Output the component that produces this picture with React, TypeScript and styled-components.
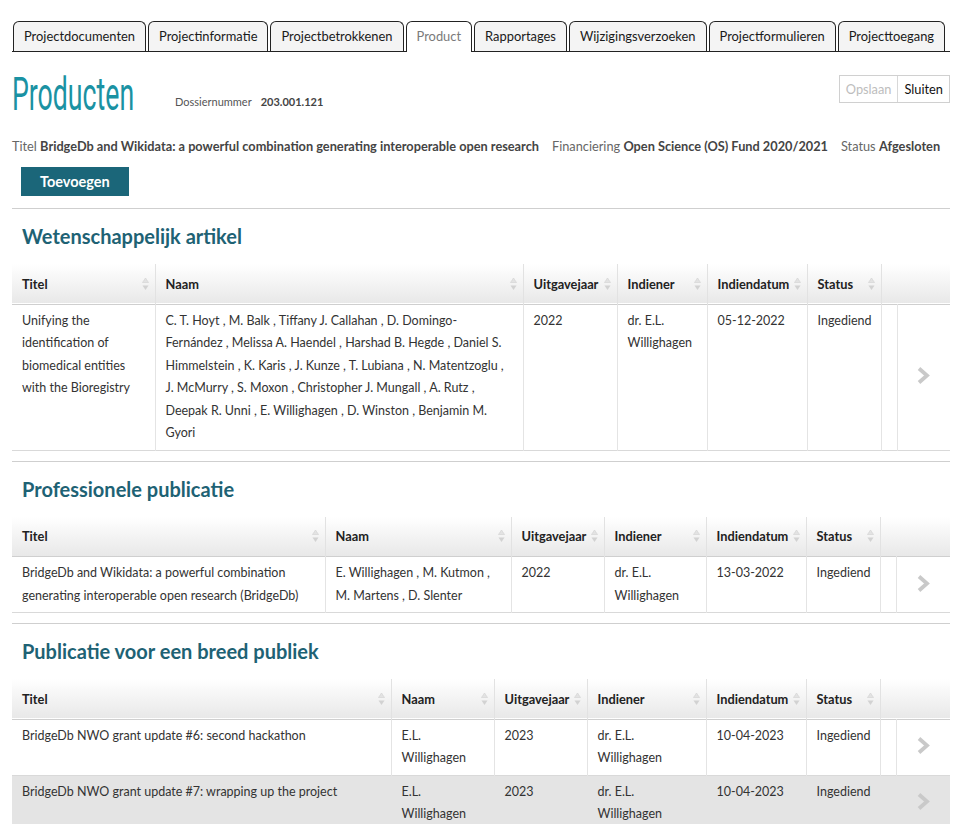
import React from "react";
import styled, { createGlobalStyle } from "styled-components";

const GlobalStyle = createGlobalStyle`
  html, body { margin: 0; padding: 0; background: #fff; }
  body { font-family: Lato, "Open Sans", sans-serif; color: #333; }
  * { box-sizing: border-box; }
`;

const Page = styled.div`
  padding: 21px 16px 0 12px;
`;

const TabBar = styled.div`
  display: flex;
  gap: 2px;
  padding-left: 1px;
  border-bottom: 1px solid #222;
  height: 31px;
`;

const Tab = styled.div<{ $active?: boolean }>`
  flex-shrink: 0;
  height: ${(p) => (p.$active ? "31px" : "30px")};
  padding: 0 10px;
  border: 1px solid #222;
  border-bottom: none;
  border-radius: 6px 6px 0 0;
  background: ${(p) => (p.$active ? "#fff" : "#f4f4f4")};
  color: ${(p) => (p.$active ? "#7a7a7a" : "#1a1a1a")};
  font-size: 12.9px;
  line-height: 28px;
  white-space: nowrap;
`;

const HeaderRow = styled.div`
  display: flex;
  align-items: flex-start;
  margin-top: 20px;
  height: 56px;
`;

const TitleBox = styled.div`
  width: 163px;
  flex-shrink: 0;
`;

const PageTitle = styled.h1`
  display: inline-block;
  margin: 0;
  font-family: Roboto, sans-serif;
  font-weight: 400;
  font-size: 46px;
  line-height: 44px;
  color: #1a92a3;
  white-space: nowrap;
  transform: scaleX(0.58);
  transform-origin: left center;
`;

const Dossier = styled.div`
  margin-top: 23px;
  font-size: 11px;
  color: #555;
  display: flex;
  gap: 9px;
  flex: 1;
`;

const DossierValue = styled.span`
  font-weight: 700;
  color: #444;
`;

const ButtonGroup = styled.div`
  display: flex;
  border: 1px solid #d0d0d0;
  height: 28px;
  margin-top: 3px;
`;

const GroupButton = styled.div<{ $disabled?: boolean }>`
  padding: 0 6px;
  font-size: 12.8px;
  line-height: 26px;
  color: ${(p) => (p.$disabled ? "#bdbdbd" : "#111")};
  & + & { border-left: 1px solid #d8d8d8; }
`;

const InfoLine = styled.div`
  display: flex;
  gap: 13px;
  font-size: 12.75px;
  color: #666;
  margin-top: 8px;
  line-height: 20px;
  white-space: nowrap;
`;

const InfoItem = styled.span`
  flex-shrink: 0;
`;

const InfoValue = styled.span`
  font-weight: 700;
  color: #444;
`;

const PrimaryButton = styled.button`
  display: block;
  margin: 11px 0 0 9px;
  height: 29px;
  padding: 0 19px;
  border: none;
  background: #1b6679;
  color: #fff;
  font-family: inherit;
  font-weight: 700;
  font-size: 14.5px;
`;

const Divider = styled.hr`
  margin: 0;
  border: none;
  border-top: 1px solid #cfcfcf;
`;

const Section = styled.section<{ $first?: boolean }>`
  margin-top: ${(p) => (p.$first ? "12px" : "10px")};
`;

const SectionTitle = styled.h2`
  margin: 0;
  padding-left: 10px;
  height: 55px;
  line-height: 55px;
  font-size: 20px;
  font-weight: 700;
  color: #1e6274;
`;

const Table = styled.table`
  width: 100%;
  border-collapse: collapse;
  table-layout: fixed;
  font-size: 12.5px;
`;

const Col = styled.col<{ $w: number }>`
  width: ${(p) => p.$w}px;
`;

const HeadRow = styled.tr`
  height: 40px;
  background: linear-gradient(#ffffff, #e8e8e8);
  border-bottom: 1px solid #cfcfcf;
`;

const Th = styled.th`
  padding: 0 6px 0 10px;
  text-align: left;
  font-weight: 700;
  font-size: 12.8px;
  color: #222;
  border-right: 1px solid #e2e2e2;
  white-space: nowrap;
  &:last-child { border-right: none; }
`;

const ThInner = styled.div`
  display: flex;
  align-items: center;
  justify-content: space-between;
`;

const BodyRow = styled.tr<{ $highlight?: boolean }>`
  background: ${(p) => (p.$highlight ? "#e4e4e4" : "#fff")};
  border-bottom: 1px solid #d9d9d9;
`;

const Td = styled.td`
  padding: 5px 10px 5px;
  vertical-align: top;
  line-height: 22.5px;
  color: #333;
  border-right: 1px solid #e4e4e4;
  &:last-child { border-right: none; }
`;

const ArrowCell = styled.td`
  vertical-align: middle;
  text-align: center;
`;

const SortIcon = () => (
  <svg width="7" height="14" viewBox="0 0 7 14">
    <path d="M3.5 1 L6.5 5.5 L0.5 5.5 Z" fill="#e3e3e3" stroke="#d2d2d2" strokeWidth="0.6" />
    <path d="M0.5 8.5 L6.5 8.5 L3.5 13 Z" fill="#d2d2d2" />
  </svg>
);

const Chevron = () => (
  <svg width="13" height="17" viewBox="0 0 13 17">
    <path d="M2 1.5 L10 8.5 L2 15.5" fill="none" stroke="#c9c9c9" strokeWidth="3.8" />
  </svg>
);

type Row = {
  titel: string;
  naam: string;
  jaar: string;
  indiener: string;
  datum: string;
  status: string;
  highlight?: boolean;
};

const headers = ["Titel", "Naam", "Uitgavejaar", "Indiener", "Indiendatum", "Status"];

const ProductTable = ({ widths, rows }: { widths: number[]; rows: Row[] }) => (
  <Table>
    <colgroup>
      {widths.map((w, i) => (
        <Col key={i} $w={w} />
      ))}
    </colgroup>
    <thead>
      <HeadRow>
        {headers.map((h) => (
          <Th key={h}>
            <ThInner>
              <span>{h}</span>
              <SortIcon />
            </ThInner>
          </Th>
        ))}
        <Th colSpan={2} />
      </HeadRow>
    </thead>
    <tbody>
      {rows.map((r, i) => (
        <BodyRow key={i} $highlight={r.highlight}>
          <Td>{r.titel}</Td>
          <Td>{r.naam}</Td>
          <Td>{r.jaar}</Td>
          <Td>{r.indiener}</Td>
          <Td>{r.datum}</Td>
          <Td>{r.status}</Td>
          <Td />
          <ArrowCell>
            <Chevron />
          </ArrowCell>
        </BodyRow>
      ))}
    </tbody>
  </Table>
);

const tabs = [
  "Projectdocumenten",
  "Projectinformatie",
  "Projectbetrokkenen",
  "Product",
  "Rapportages",
  "Wijzigingsverzoeken",
  "Projectformulieren",
  "Projecttoegang",
];

export default function App() {
  return (
    <>
      <GlobalStyle />
      <Page>
        <TabBar>
          {tabs.map((t) => (
            <Tab key={t} $active={t === "Product"}>
              {t}
            </Tab>
          ))}
        </TabBar>

        <HeaderRow>
          <TitleBox>
            <PageTitle>Producten</PageTitle>
          </TitleBox>
          <Dossier>
            <span>Dossiernummer</span>
            <DossierValue>203.001.121</DossierValue>
          </Dossier>
          <ButtonGroup>
            <GroupButton $disabled>Opslaan</GroupButton>
            <GroupButton>Sluiten</GroupButton>
          </ButtonGroup>
        </HeaderRow>

        <InfoLine>
          <InfoItem>
            Titel <InfoValue>BridgeDb and Wikidata: a powerful combination generating interoperable open research</InfoValue>
          </InfoItem>
          <InfoItem>
            Financiering <InfoValue>Open Science (OS) Fund 2020/2021</InfoValue>
          </InfoItem>
          <InfoItem>
            Status <InfoValue>Afgesloten</InfoValue>
          </InfoItem>
        </InfoLine>

        <PrimaryButton>Toevoegen</PrimaryButton>

        <Section $first>
          <Divider />
          <SectionTitle>Wetenschappelijk artikel</SectionTitle>
          <ProductTable
            widths={[143, 368, 94, 90, 100, 74, 16, 53]}
            rows={[
              {
                titel: "Unifying the identification of biomedical entities with the Bioregistry",
                naam:
                  "C. T. Hoyt , M. Balk , Tiffany J. Callahan , D. Domingo-Fernández , Melissa A. Haendel , Harshad B. Hegde , Daniel S. Himmelstein , K. Karis , J. Kunze , T. Lubiana , N. Matentzoglu , J. McMurry , S. Moxon , Christopher J. Mungall , A. Rutz , Deepak R. Unni , E. Willighagen , D. Winston , Benjamin M. Gyori",
                jaar: "2022",
                indiener: "dr. E.L. Willighagen",
                datum: "05-12-2022",
                status: "Ingediend",
              },
            ]}
          />
        </Section>

        <Section>
          <Divider />
          <SectionTitle>Professionele publicatie</SectionTitle>
          <ProductTable
            widths={[313, 186, 93, 102, 100, 74, 16, 54]}
            rows={[
              {
                titel: "BridgeDb and Wikidata: a powerful combination generating interoperable open research (BridgeDb)",
                naam: "E. Willighagen , M. Kutmon , M. Martens , D. Slenter",
                jaar: "2022",
                indiener: "dr. E.L. Willighagen",
                datum: "13-03-2022",
                status: "Ingediend",
              },
            ]}
          />
        </Section>

        <Section>
          <Divider />
          <SectionTitle>Publicatie voor een breed publiek</SectionTitle>
          <ProductTable
            widths={[379, 103, 93, 119, 100, 74, 16, 54]}
            rows={[
              {
                titel: "BridgeDb NWO grant update #6: second hackathon",
                naam: "E.L. Willighagen",
                jaar: "2023",
                indiener: "dr. E.L. Willighagen",
                datum: "10-04-2023",
                status: "Ingediend",
              },
              {
                titel: "BridgeDb NWO grant update #7: wrapping up the project",
                naam: "E.L. Willighagen",
                jaar: "2023",
                indiener: "dr. E.L. Willighagen",
                datum: "10-04-2023",
                status: "Ingediend",
                highlight: true,
              },
            ]}
          />
        </Section>
      </Page>
    </>
  );
}
